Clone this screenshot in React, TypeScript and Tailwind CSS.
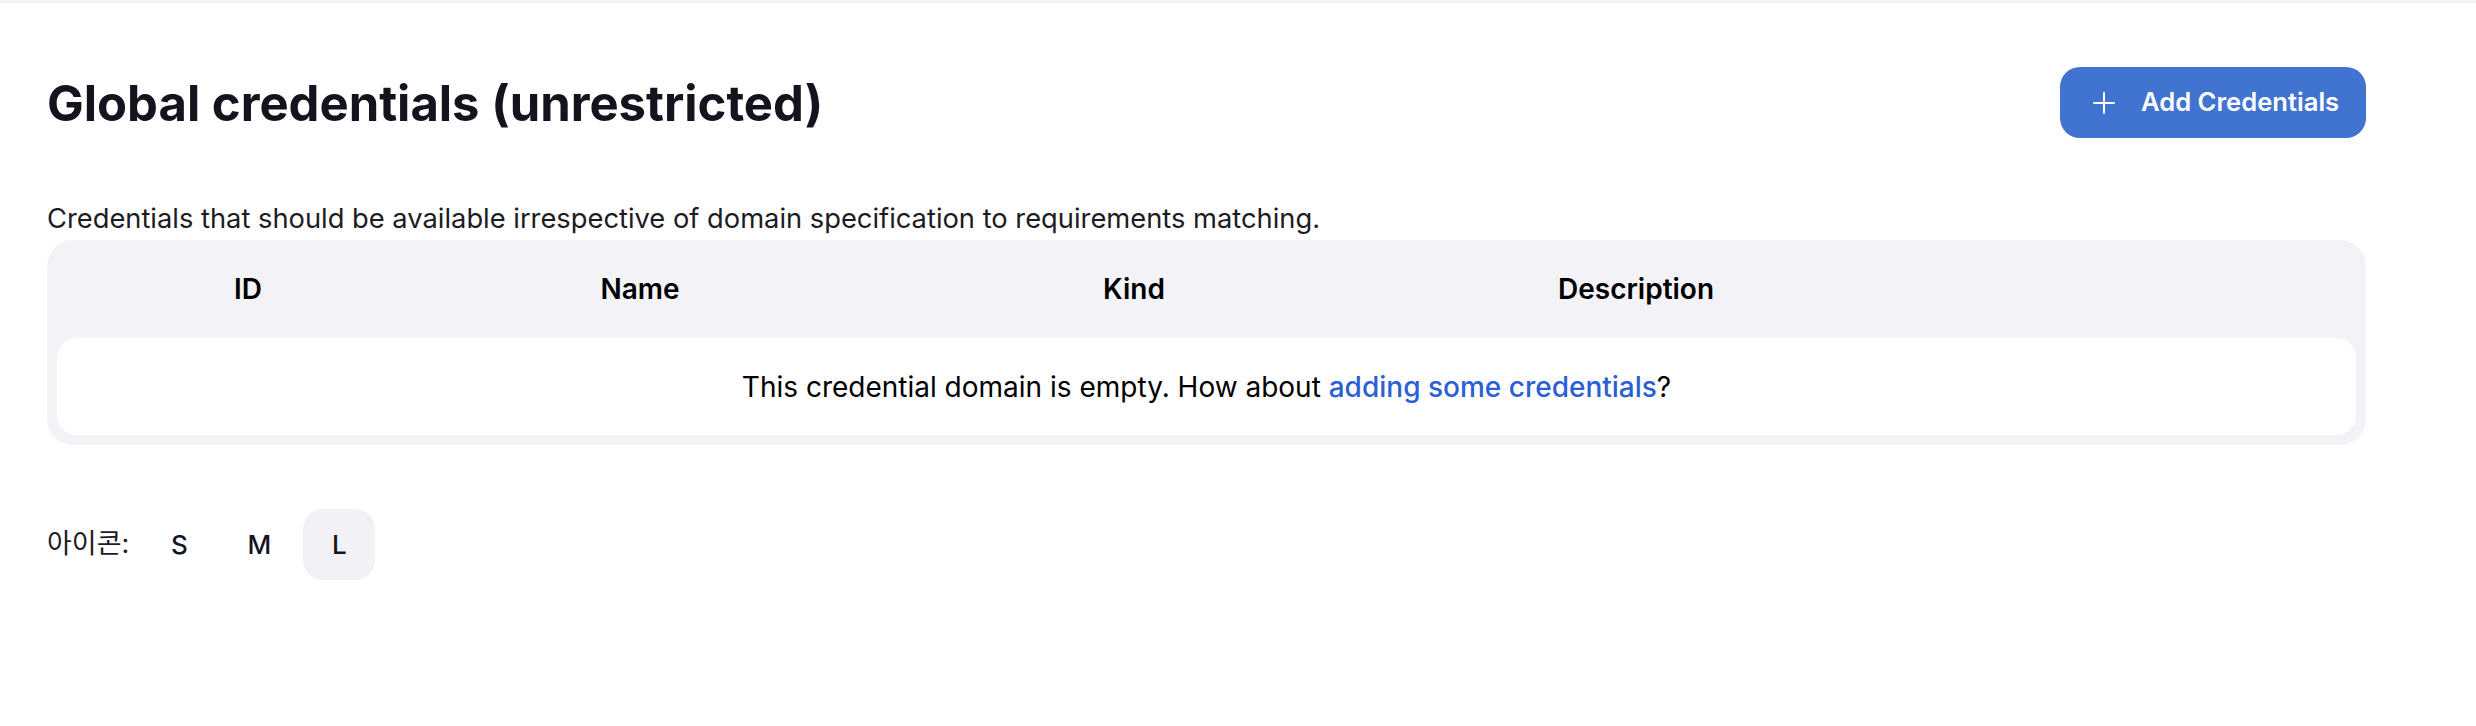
import React from 'react';

const font = { fontFamily: 'Inter, "Noto Sans CJK KR", sans-serif' };

const columns = ['ID', 'Name', 'Kind', 'Description'];

export default function App() {
  return (
    <div className="min-h-screen bg-white text-[#14141f]" style={font}>
      <div className="h-[3px] bg-[#f2f2f5]" />
      <div className="pl-[47px] w-[2366px]">
        <div className="mt-[64px] flex items-center justify-between h-[71px]">
          <h1 className="text-[49px] font-bold leading-[58px] pt-[2px]">Global credentials (unrestricted)</h1>
          <button className="h-[71px] w-[306px] rounded-[20px] bg-[#4174d0] text-white flex items-center pl-[33px] gap-[26px] text-[25.6px] font-semibold">
            <svg width="22" height="22" viewBox="0 0 22 22" fill="none" stroke="currentColor" strokeWidth="2" strokeLinecap="round">
              <line x1="11" y1="1" x2="11" y2="21" />
              <line x1="1" y1="11" x2="21" y2="11" />
            </svg>
            Add Credentials
          </button>
        </div>

        <p className="mt-[61px] text-[27.3px] leading-[40px] text-[#1c1c24]">
          Credentials that should be available irrespective of domain specification to requirements matching.
        </p>

        <div className="mt-px rounded-[26px] bg-[#f3f3f7] px-[10px] pb-[10px]">
          <div className="grid grid-cols-[382px_402px_586px_418px_1fr] h-[98px] items-center text-[28px] font-semibold text-black">
            {columns.map((c) => (
              <div key={c} className="text-center">{c}</div>
            ))}
            <div />
          </div>
          <div className="h-[97px] rounded-[20px] bg-white flex items-center justify-center text-[28px] text-black">
            <span>
              This credential domain is empty. How about{' '}
              <a href="#" className="text-[#2b5fd6] font-medium">adding some credentials</a>?
            </span>
          </div>
        </div>

        <div className="mt-[64px] flex items-center">
          <span className="text-[27px] text-[#1c1c24] mr-[14px]">아이콘:</span>
          <div className="flex gap-[8px]">
            {['S', 'M', 'L'].map((s) => (
              <button
                key={s}
                className={
                  'w-[72px] h-[71px] rounded-[20px] flex items-center justify-center text-[26px] font-medium ' +
                  (s === 'L' ? 'bg-[#f2f2f6]' : 'bg-transparent')
                }
              >
                {s}
              </button>
            ))}
          </div>
        </div>
      </div>
    </div>
  );
}
